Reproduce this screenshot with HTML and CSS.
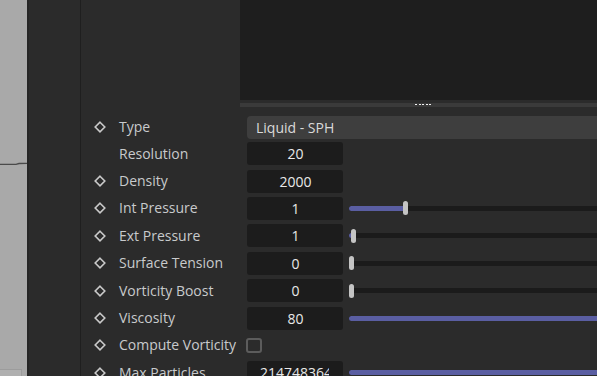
FILE: index.html
```html
<!DOCTYPE html>
<html>
<head>
<meta charset="utf-8">
<link rel="stylesheet" href="styles.css">
</head>
<body>
<div class="app">
  <div class="strip">
    <svg class="curve" width="27" height="4" viewBox="0 0 27 4"><polyline points="0,2.3 16,2.3 19,1.5 27,1.4" fill="none" stroke="#4a4a4a" stroke-width="1.3"/></svg>
    <div class="strip-box"></div>
  </div>
  <div class="edge"></div>
  <div class="gutter"></div>
  <div class="vline"></div>
  <div class="main">
    <div class="top"><div class="top-pad"></div><div class="viewport"></div></div>
    <div class="splitter"><div class="grip"><i></i><i></i><i></i><i></i><i></i></div></div>
    <div class="rows">
      <div class="row row-first">
        <span class="key"><svg viewBox="0 0 12 12"><polygon points="6,1.2 10.8,6 6,10.8 1.2,6"/></svg></span>
        <span class="label">Type</span>
        <div class="dropdown">Liquid - SPH</div>
      </div>
      <div class="row">
        <span class="key"></span>
        <span class="label">Resolution</span>
        <div class="field"><span class="val">20</span></div>
      </div>
      <div class="row">
        <span class="key"><svg viewBox="0 0 12 12"><polygon points="6,1.2 10.8,6 6,10.8 1.2,6"/></svg></span>
        <span class="label">Density</span>
        <div class="field"><span class="val">2000</span></div>
      </div>
      <div class="row">
        <span class="key"><svg viewBox="0 0 12 12"><polygon points="6,1.2 10.8,6 6,10.8 1.2,6"/></svg></span>
        <span class="label">Int Pressure</span>
        <div class="field"><span class="val">1</span></div>
        <div class="slider"><div class="fill" style="width:55px"></div><div class="thumb" style="left:54px"></div></div>
      </div>
      <div class="row">
        <span class="key"><svg viewBox="0 0 12 12"><polygon points="6,1.2 10.8,6 6,10.8 1.2,6"/></svg></span>
        <span class="label">Ext Pressure</span>
        <div class="field"><span class="val">1</span></div>
        <div class="slider"><div class="fill" style="width:4px"></div><div class="thumb" style="left:2px"></div></div>
      </div>
      <div class="row">
        <span class="key"><svg viewBox="0 0 12 12"><polygon points="6,1.2 10.8,6 6,10.8 1.2,6"/></svg></span>
        <span class="label">Surface Tension</span>
        <div class="field"><span class="val">0</span></div>
        <div class="slider"><div class="fill" style="width:0px"></div><div class="thumb" style="left:0px"></div></div>
      </div>
      <div class="row">
        <span class="key"><svg viewBox="0 0 12 12"><polygon points="6,1.2 10.8,6 6,10.8 1.2,6"/></svg></span>
        <span class="label">Vorticity Boost</span>
        <div class="field"><span class="val">0</span></div>
        <div class="slider"><div class="fill" style="width:0px"></div><div class="thumb" style="left:0px"></div></div>
      </div>
      <div class="row">
        <span class="key"><svg viewBox="0 0 12 12"><polygon points="6,1.2 10.8,6 6,10.8 1.2,6"/></svg></span>
        <span class="label">Viscosity</span>
        <div class="field"><span class="val">80</span></div>
        <div class="slider"><div class="fill" style="width:100%"></div></div>
      </div>
      <div class="row">
        <span class="key"><svg viewBox="0 0 12 12"><polygon points="6,1.2 10.8,6 6,10.8 1.2,6"/></svg></span>
        <span class="label">Compute Vorticity</span>
        <span class="check"></span>
      </div>
      <div class="row">
        <span class="key"><svg viewBox="0 0 12 12"><polygon points="6,1.2 10.8,6 6,10.8 1.2,6"/></svg></span>
        <span class="label">Max Particles</span>
        <div class="field field-long"><span class="val">2147483647</span></div>
        <div class="slider"><div class="fill" style="width:100%"></div></div>
      </div>
    </div>
  </div>
</div>
</body>
</html>
```

FILE: styles.css
```css
html, body {
  margin: 0;
  padding: 0;
  width: 597px;
  height: 376px;
  overflow: hidden;
  background: #2b2b2b;
  font-family: "Open Sans", "Noto Sans", sans-serif;
  font-size: 14px;
}

.app {
  display: flex;
  height: 376px;
}

.strip {
  width: 27px;
  flex: none;
  background: #a9a9a9;
  display: flex;
  flex-direction: column;
}

.curve {
  display: block;
  margin-top: 162px;
}

.strip-box {
  margin-top: auto;
  width: 21px;
  height: 6px;
  background: #b0b0b0;
  border-top: 1px solid #9c9c9c;
  border-right: 1px solid #9c9c9c;
}

.edge {
  width: 2px;
  flex: none;
  background: #252525;
}

.gutter {
  width: 51px;
  flex: none;
  background: #2b2b2b;
}

.vline {
  width: 1px;
  flex: none;
  background: #1f1f1f;
}

.main {
  flex: 1;
  min-width: 0;
  display: flex;
  flex-direction: column;
}

.top {
  display: flex;
  height: 100px;
  flex: none;
}

.top-pad {
  width: 159px;
  flex: none;
}

.viewport {
  flex: 1;
  background: #1e1e1e;
}

.splitter {
  margin: 3px 0 0 159px;
  height: 4px;
  flex: none;
  background: #3a3a3a;
}

.grip {
  display: flex;
  gap: 1.6px;
  margin: 1px 0 0 175px;
}

.grip i {
  display: block;
  width: 2px;
  height: 1px;
  background: #f0f0f0;
}

.rows {
  margin-top: 7px;
  display: flex;
  flex-direction: column;
}

.row {
  height: 27.4px;
  display: grid;
  grid-template-columns: 38px 128px 96px 1fr;
  column-gap: 0;
  align-items: center;
}

.row-first {
  height: 26px;
}

.key {
  display: flex;
  align-items: center;
  padding-left: 13px;
}

.key svg {
  width: 12px;
  height: 12px;
  display: block;
}

.key polygon {
  fill: none;
  stroke: #c9c9c9;
  stroke-width: 1.6;
}

.label {
  color: #c8cacc;
  white-space: nowrap;
  line-height: 18px;
}

.dropdown {
  grid-column: 3 / 5;
  height: 23px;
  margin-right: -8px;
  background: #3e3e3e;
  border-radius: 4px;
  color: #dadada;
  padding-left: 9px;
  line-height: 23px;
}

.field {
  height: 23px;
  background: #1c1c1c;
  border-radius: 3px;
  padding: 0 12px 0 13px;
  color: #e8e8e8;
  line-height: 23px;
}

.val {
  display: block;
  overflow: hidden;
  white-space: nowrap;
  text-align: center;
}

.field-long .val {
  text-align: left;
}

.field-long {
  padding-right: 14px;
}

.slider {
  position: relative;
  height: 5px;
  margin: 0 -12px 0 6px;
  background: #1b1b1b;
  border-radius: 3px 0 0 3px;
}

.fill {
  height: 100%;
  background: #5a5ea2;
  border-radius: 3px 0 0 3px;
}

.thumb {
  position: absolute;
  top: -4.5px;
  width: 5px;
  height: 14px;
  background: #c4c4c4;
  border-radius: 2.5px;
}

.check {
  width: 12px;
  height: 11px;
  margin-left: -1px;
  border: 2px solid #5c5c5c;
  border-radius: 3px;
  background: #2b2b2b;
}
```
